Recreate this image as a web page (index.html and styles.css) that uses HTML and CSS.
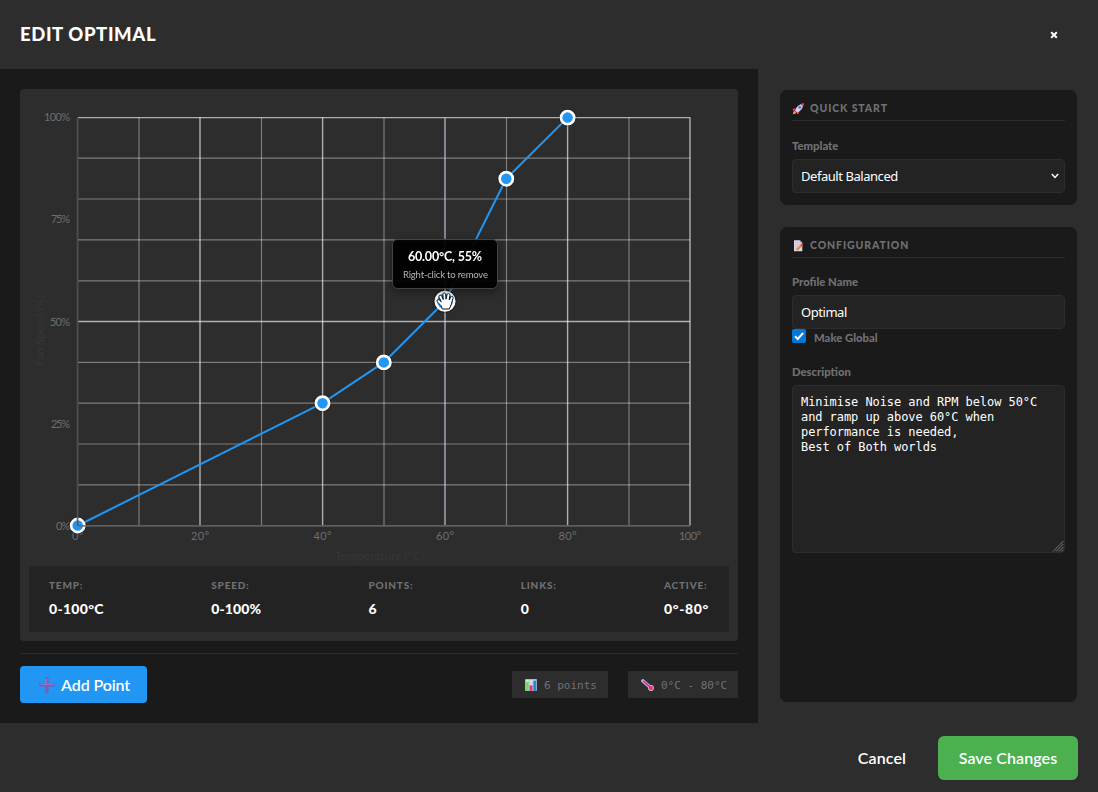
FILE: index.html
```html
<!DOCTYPE html>
<html lang="en">
<head>
<meta charset="utf-8">
<title>Edit Optimal</title>
<link rel="stylesheet" href="styles.css">
</head>
<body>
<div class="dialog">
  <header class="header">
    <h1 class="title">EDIT OPTIMAL</h1>
    <button class="close" aria-label="Close"><svg width="8" height="8" viewBox="0 0 8 8"><path d="M1.2 1.2 6.8 6.8M6.8 1.2 1.2 6.8" stroke="#fff" stroke-width="2"/></svg></button>
  </header>
  <div class="body">
    <main class="editor">
      <section class="chart-card">
        <svg class="chart" width="700" height="468" viewBox="29 98 700 468">
          <g class="grid-minor">
            <path d="M139 117.5V525.5M261.5 117.5V525.5M384 117.5V525.5M506.5 117.5V525.5M629 117.5V525.5"/>
            <path d="M78 158.2H690M78 199H690M78 239.9H690M78 280.8H690M78 362.4H690M78 403.2H690M78 444H690M78 484.9H690"/>
          </g>
          <g class="grid-major">
            <path d="M200 117.5V525.5M322.6 117.5V525.5M445 117.5V525.5M567.6 117.5V525.5M690 117.5V525.5"/>
            <path d="M78 117.6H690M78 321.5H690"/>
          </g>
          <path class="guide" d="M445.2 117.5V525.5"/>
          <g class="tick">
            <text x="70" y="121" text-anchor="end" textLength="26">100%</text>
            <text x="70" y="223" text-anchor="end" textLength="19">75%</text>
            <text x="70" y="326" text-anchor="end" textLength="20">50%</text>
            <text x="70" y="428" text-anchor="end" textLength="19">25%</text>
            <text x="70" y="530" text-anchor="end" textLength="14">0%</text>
            <text x="72" y="540" textLength="11">0°</text>
            <text x="191" y="540" textLength="18">20°</text>
            <text x="313.5" y="540" textLength="18">40°</text>
            <text x="436" y="540" textLength="18">60°</text>
            <text x="558.5" y="540" textLength="18">80°</text>
            <text x="679" y="540" textLength="22">100°</text>
          </g>
          <text class="axis-name" x="335" y="560" textLength="89">Temperature (°C)</text>
          <text class="axis-name" transform="translate(44 366) rotate(-90)" textLength="71">Fan Speed (%)</text>
          <path class="curve" d="M78 525.5 322.5 403.2 383.8 362.4 445 301.3 506.3 178.7 567.6 117.6"/>
          <g class="point-shadow">
            <circle cx="77.7" cy="525.5" r="8.9"/><circle cx="322.5" cy="403.2" r="8.9"/><circle cx="383.8" cy="362.4" r="8.9"/><circle cx="445" cy="301.3" r="11.9"/><circle cx="506.3" cy="178.7" r="8.9"/><circle cx="567.6" cy="117.6" r="8.9"/>
          </g>
          <g class="point">
            <circle cx="77.7" cy="525.5" r="6.6"/><circle cx="322.5" cy="403.2" r="6.6"/><circle cx="383.8" cy="362.4" r="6.6"/><circle cx="445" cy="301.3" r="9.2"/><circle cx="506.3" cy="178.7" r="6.6"/><circle cx="567.6" cy="117.6" r="6.6"/>
          </g>
          <path class="axis-x" d="M78 525.8H690"/>
          <path class="axis-y" d="M77.6 117.5V526"/>
          <g class="tooltip">
            <rect x="392.5" y="239.5" width="105" height="49" rx="5"/>
            <text class="tip-value" x="408" y="260.5" textLength="74">60.00°C, 55%</text>
            <text class="tip-hint" x="403" y="278" textLength="85">Right-click to remove</text>
          </g>
          <path class="hand" d="M442.3 309 441 305.7 437.6 302.2C436 300.2 438.1 298.9 439.6 300.2L441.2 301.7 439.1 297.3C438.4 295.2 440.8 294.4 441.8 296.2L443.3 299.5 442.9 294.6C442.9 292.4 445.5 292.4 445.7 294.6L446 299.2 447 294.8C447.5 292.8 450.1 293.5 449.9 295.4L449.2 300 450.7 297.1C451.5 295.4 453.6 296.3 453 298.3L451.3 304.2 449.4 309Z"/>
        </svg>
        <div class="stats">
          <div class="stat w-temp"><span class="stat-label">TEMP:</span><strong class="stat-value">0-100°C</strong></div>
          <div class="stat w-speed"><span class="stat-label">SPEED:</span><strong class="stat-value">0-100%</strong></div>
          <div class="stat w-points"><span class="stat-label">POINTS:</span><strong class="stat-value">6</strong></div>
          <div class="stat w-links"><span class="stat-label">LINKS:</span><strong class="stat-value">0</strong></div>
          <div class="stat w-active"><span class="stat-label">ACTIVE:</span><strong class="stat-value">0°-80°</strong></div>
        </div>
      </section>
      <div class="toolbar">
        <button class="add"><svg width="16" height="16" viewBox="0 0 16 16"><path d="M8 1.2V14.8M1.2 8H14.8" stroke="#7e57c2" stroke-width="3" stroke-linecap="round"/><path d="M7.3 1.5V7.3M1.5 7.3H14.5" fill="none" stroke="#9a80bd" stroke-width="1"/></svg><span>Add Point</span></button>
        <div class="chips">
          <span class="chip chip-points"><svg width="12" height="12" viewBox="0 0 12 12"><rect x=".2" y=".2" width="11.6" height="11.6" fill="#d5dbe0"/><path d="M0 4H12M0 8H12M4 0V12M8 0V12" stroke="#b5bec8" stroke-width=".5"/><rect x=".7" y="3" width="3" height="8.8" fill="#75d36b"/><rect x="4.5" y="6.3" width="3" height="5.5" fill="#df3b78"/><rect x="8.3" y="1.6" width="3" height="10.2" fill="#2388db"/></svg><span>6 points</span></span>
          <span class="chip chip-temp"><svg width="13" height="12" viewBox="0 0 13 12"><path d="M2 2 10 9" stroke="#c5b8dd" stroke-width="3.6" stroke-linecap="round"/><circle cx="10" cy="9" r="2.9" fill="#cbbbe0"/><path d="M2.6 2.4 10 9" stroke="#c93a9c" stroke-width="1.8" stroke-linecap="round"/><circle cx="10" cy="9" r="2" fill="#fb2a62"/></svg><span>0°C - 80°C</span></span>
        </div>
      </div>
    </main>
    <aside class="side">
      <section class="panel">
        <h2 class="panel-title"><svg width="13" height="13" viewBox="0 -.5 13 12.5"><path d="M3.2 5.2 1 6 .8 8.2 3 7.8ZM7.3 8.5 6.8 11 5 11.4 5 9Z" fill="#e8346e"/><path d="M3 8 5.2 9.8C8.6 8.5 11.3 5 11.6.7 7.5 1 4.2 4 3 8Z" fill="#d6d2e6"/><path d="M8.5 1.3C9.5.9 10.6.7 11.6.7 11.5 2 11.2 3 10.8 4Z" fill="#ef3773"/><circle cx="7.8" cy="4.4" r="1.5" fill="#3a86d8"/><path d="M.8 11.4 1.5 8.7 3 8.2 4.5 9.8 3.4 11Z" fill="#ff9a35"/></svg><span>QUICK START</span></h2>
        <label class="label">Template</label>
        <div class="field select"><span class="field-text">Default Balanced</span><svg width="8" height="6" viewBox="0 0 8 6"><path d="M.8 1 4 4.4 7.2 1" fill="none" stroke="#fff" stroke-width="1.5"/></svg></div>
      </section>
      <section class="panel panel-config">
        <h2 class="panel-title"><svg width="13" height="13" viewBox="0 -.5 13 12.5"><path d="M2 .6H7.8L10.3 3V11.5H2Z" fill="#ddd6e3"/><path d="M7.8.6V3H10.3Z" fill="#a9a3b5"/><path d="M3 3H7M3 5H8M3 7H6M3 9H5" stroke="#b9b3c8" stroke-width=".6"/><path d="M4.8 10.2 9.6 5.4" stroke="#f58232" stroke-width="2.2"/><path d="M9.2 5.8 10.4 4.6" stroke="#e83e4c" stroke-width="2.3"/></svg><span>CONFIGURATION</span></h2>
        <label class="label">Profile Name</label>
        <div class="field"><span class="field-text">Optimal</span></div>
        <div class="check-row"><svg width="14" height="14" viewBox="0 0 14 14"><rect width="14" height="14" rx="2" fill="#0078d7"/><path d="M3 7.2 5.8 10 11.2 3.8" fill="none" stroke="#fff" stroke-width="2"/></svg><span class="label-global">Make Global</span></div>
        <label class="label">Description</label>
        <div class="area">Minimise Noise and RPM below 50°C
and ramp up above 60°C when
performance is needed,
Best of Both worlds<svg class="grip" width="12" height="12" viewBox="0 0 12 12"><path d="M1 11.5 11.5 1M4 11.5 11.5 4M7 11.5 11.5 7M9.7 11.5 11.5 9.7" stroke="#858585" stroke-width=".9"/></svg></div>
      </section>
    </aside>
  </div>
  <footer class="footer">
    <button class="cancel">Cancel</button>
    <button class="save">Save Changes</button>
  </footer>
</div>
</body>
</html>
```
FILE: styles.css
```css
* { box-sizing: border-box; }
body { margin: 0; background: #2d2d2d; color: #fff; font-family: Lato, "Noto Sans", sans-serif; }
button { border: 0; padding: 0; background: none; color: #fff; font-family: inherit; }
.dialog { width: 1098px; height: 792px; display: flex; flex-direction: column; overflow: hidden; }
.header { height: 69px; padding: 0 40px 0 20px; display: flex; justify-content: space-between; align-items: center; }
.title { margin: 0; padding-bottom: 2px; font-size: 18.5px; line-height: 24px; font-weight: 900; letter-spacing: .6px; }
.close { display: flex; padding: 1px 0 0; }
.body { height: 654px; display: flex; }
.editor { width: 758px; padding: 20px; background: #1a1a1a; }
.chart-card { height: 552px; padding: 9px; background: #2d2d2d; border-radius: 4px; }
.chart { display: block; }
.grid-minor { fill: none; stroke: #fff; stroke-opacity: .38; stroke-width: 1.2; }
.grid-major { fill: none; stroke: #fff; stroke-opacity: .62; stroke-width: 1.4; }
.guide { stroke: #2196f3; stroke-opacity: .5; stroke-dasharray: 4 4; }
.tick { fill: #6d6d6f; font-size: 11px; }
.axis-name { fill: #363636; font-size: 12px; }
.curve { fill: none; stroke: #2196f3; stroke-width: 2; }
.point-shadow { fill: #000; fill-opacity: .25; }
.point { fill: #2196f3; stroke: #fff; stroke-width: 2.7; }
.axis-x { stroke: #666; stroke-width: 1.7; stroke-opacity: .85; }
.axis-y { stroke: #555; stroke-width: 1.8; stroke-opacity: .85; }
.tooltip { filter: drop-shadow(0 3px 5px rgba(0, 0, 0, .4)); }
.tooltip rect { fill: #000; fill-opacity: .92; stroke: #444; }
.tip-value { fill: #fff; font-size: 12.5px; font-weight: 700; }
.tip-hint { fill: #b5b5b5; font-size: 9.5px; }
.hand { fill: #fff; stroke: #000; stroke-width: .9; stroke-linejoin: round; }
.stats { height: 66px; padding: 13px 20px; background: #232323; display: flex; justify-content: space-between; }
.stat { display: flex; flex-direction: column; white-space: nowrap; }
.stat-label { font-size: 10px; line-height: 13px; font-weight: 900; color: #707074; letter-spacing: .8px; }
.stat-value { font-size: 14px; line-height: 18px; margin-top: 8px; font-weight: 900; letter-spacing: .1px; }
.w-temp { width: 55px; }
.w-temp .stat-value { letter-spacing: .3px; }
.w-speed { width: 50px; }
.w-points { width: 45px; }
.w-links { width: 36px; }
.w-active { width: 45px; }
.w-active .stat-value { letter-spacing: .6px; }
.toolbar { margin-top: 12px; padding-top: 12px; border-top: 1px solid #2d2d2d; display: flex; justify-content: space-between; align-items: center; }
.add { width: 127px; height: 37px; display: flex; align-items: center; padding-left: 19px; gap: 6px; border-radius: 4px; background: #2196f3; font-size: 16px; white-space: nowrap; font-weight: 600; letter-spacing: -.1px; }
.chips { display: flex; gap: 20px; }
.chip { height: 27px; padding: 0 0 0 13px; display: flex; align-items: center; gap: 7px; background: #2d2d2d; color: #707074; font: 11px "DejaVu Sans Mono", monospace; white-space: pre; }
.chip span { padding-top: 2px; }
.chip-points { width: 96px; }
.chip-temp { width: 110px; }
.side { width: 340px; padding: 21px 21px 21px 22px; display: flex; flex-direction: column; gap: 22px; }
.panel { height: 115px; padding: 12px; background: #1a1a1a; border-radius: 7px; }
.panel-config { height: 475px; }
.panel-title { margin: 0 0 17px; height: 19px; display: flex; align-items: flex-start; gap: 5px; border-bottom: 1px solid #2d2d2d; font-size: 10.5px; line-height: 13px; font-weight: 900; letter-spacing: .9px; color: #707074; white-space: nowrap; }
.panel-config .panel-title { margin-bottom: 16px; }
.label { display: block; height: 16px; margin-bottom: 5px; font-size: 11.3px; line-height: 16px; font-weight: 900; letter-spacing: 0; color: #707074; }
.field { height: 34px; padding: 0 5px 0 8px; display: flex; align-items: center; justify-content: space-between; background: #232323; border: 1px solid #2d2d2d; border-radius: 4px; font-family: "Noto Sans", sans-serif; font-size: 13px; letter-spacing: -.45px; }
.check-row { height: 35px; display: flex; align-items: flex-start; gap: 8px; }
.label-global { padding-top: 1px; font-size: 11.3px; line-height: 15px; font-weight: 900; color: #707074; }
.area { position: relative; height: 168px; padding: 9px 8px; background: #232323; border: 1px solid #2d2d2d; border-radius: 4px; font: 12px/15px "DejaVu Sans Mono", monospace; letter-spacing: -.07px; white-space: pre; }
.grip { position: absolute; right: 0; bottom: 0; }
.footer { height: 69px; padding: 13px 20px 12px; display: flex; justify-content: flex-end; gap: 32px; }
.cancel, .save { height: 44px; padding-bottom: 2px; font-size: 16px; font-weight: 600; letter-spacing: .1px; white-space: nowrap; }
.save { width: 140px; border-radius: 6px; background: #4caf50; }
```
